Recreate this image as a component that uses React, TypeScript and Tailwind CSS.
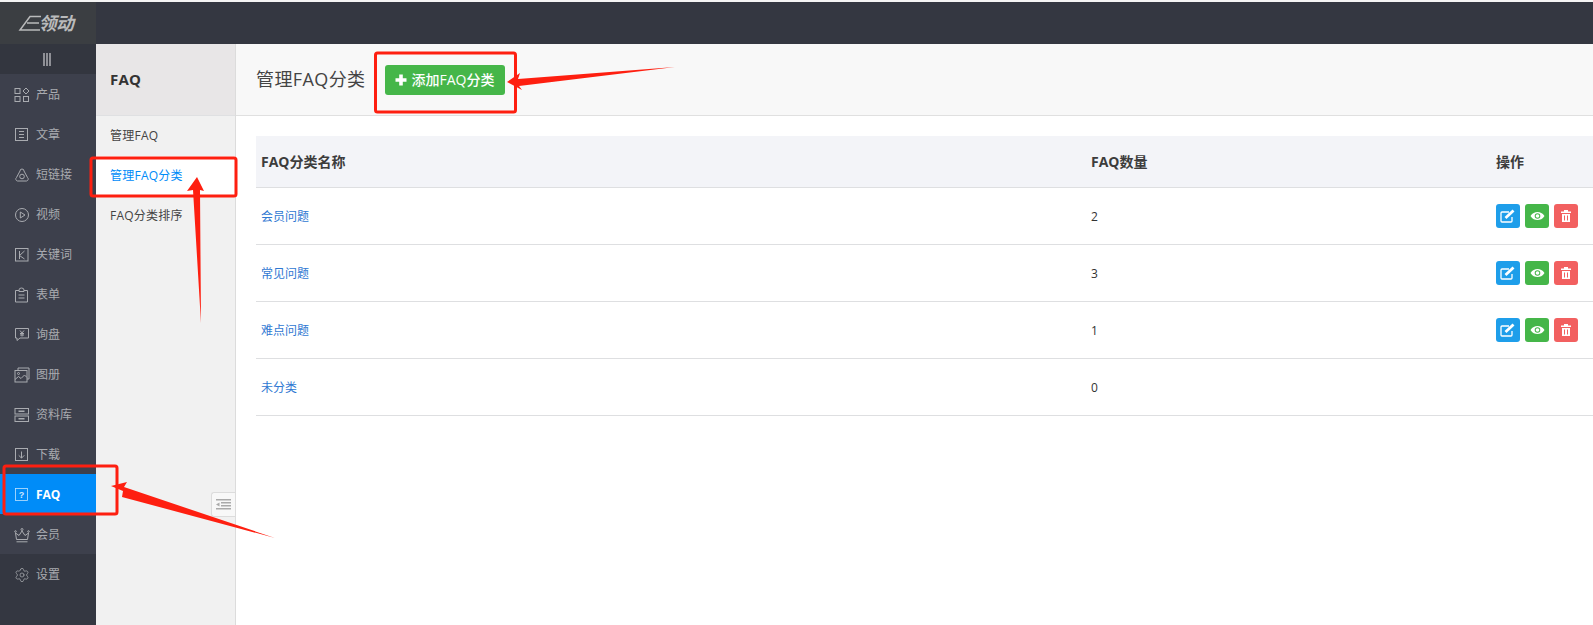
import React from "react";
import { Settings } from "lucide-react";

const S = { fill: "none", stroke: "currentColor", strokeWidth: 1 } as const;
const I = ({ children }: { children: React.ReactNode }) => (
  <svg width="16" height="16" viewBox="0 0 16 16" {...S} className="shrink-0">{children}</svg>
);
const menu: [string, React.ReactNode][] = [
  ["产品", <I><rect x="1" y="1.500" width="5" height="5" /><path d="M12 1l3 3-3 3-3-3z" /><rect x="1" y="9.500" width="5" height="5" /><rect x="9.500" y="9.500" width="5" height="5" /></I>],
  ["文章", <I><rect x="1.500" y="1.500" width="12" height="12" /><path d="M5 4.500h5M5 7.500h5M5 10.500h5" /></I>],
  ["短链接", <I><path d="M8 2a2 2 0 012 2l3.500 6.500a2 2 0 01-1 3.500h-9a2 2 0 01-1-3.500L6 4a2 2 0 012-2z" /><circle cx="8" cy="9.500" r="2.300" /></I>],
  ["视频", <I><circle cx="8" cy="8" r="6.500" /><path d="M6.300 5v6l4.700-3z" /></I>],
  ["关键词", <I><rect x="1.500" y="1.500" width="12.500" height="12.500" /><path d="M5.500 4v8M10.500 4L5.500 8.500l5 3.500" /></I>],
  ["表单", <I><path d="M5 3.500H1.500V15h12V3.500H10" /><path d="M5 4.500V3a2.500 2 0 015 0v1.500z" /><path d="M4.500 8h6M4.500 11h6" /></I>],
  ["询盘", <I><path d="M1.500 1.500h13v9.500H6l-3 2.500V11H1.500z" /><path d="M6 3.500l2 2.500 2-2.500M8 6v3.500M6 6.500h4M6 8h4" /></I>],
  ["图册", <I><path d="M4 3.500V1h11v11h-2" /><rect x="1" y="3.500" width="12" height="11.500" /><path d="M1 12.500l3.500-3 2.500 2 3.500-3.500 2.500 2.500" /><circle cx="4.500" cy="6.500" r="1" /></I>],
  ["资料库", <I><rect x="1" y="1.500" width="13.500" height="5.500" /><rect x="1" y="9" width="13.500" height="5.500" /><path d="M4.500 4.200h6M4.500 11.800h6" strokeWidth="1.500" /></I>],
  ["下载", <I><rect x="1.500" y="1.500" width="12" height="12" /><path d="M7.500 4.500v6.500M4.700 8.300l2.800 2.800 2.800-2.800" /></I>],
  ["FAQ", <I><rect x="1.500" y="1.500" width="12" height="12" strokeWidth=".8" opacity=".75" /><text x="7.500" y="11" fontSize="9" textAnchor="middle" fill="currentColor" stroke="none" opacity=".8" fontFamily="Liberation Sans">?</text></I>],
  ["会员", <I><path d="M1.500 6l3.500 2.500 3-4.500 3 4.500L14.500 6l-1 6.500h-11z" /><path d="M2.500 14.800h11" /><circle cx="8" cy="2.500" r="1" /><circle cx="1.500" cy="4.500" r=".8" /><circle cx="14.500" cy="4.500" r=".8" /></I>],
];
const rows: [string, string, boolean][] = [
  ["会员问题", "2", true],
  ["常见问题", "3", true],
  ["难点问题", "1", true],
  ["未分类", "0", false],
];
const Btn = ({ c, children }: { c: string; children: React.ReactNode }) => (
  <span className={`flex h-6 w-6 items-center justify-center rounded-[3px] text-white ${c}`}>{children}</span>
);
export default function App() {
  return (
    <div className="relative h-[625px] w-[1593px] overflow-hidden bg-white text-[12px] text-[#333]" style={{ fontFamily: '"Open Sans","Noto Sans CJK SC",sans-serif' }}>
      <div className="h-[2px] bg-[#f4f4f4]" />
      <div className="flex h-[623px]">
        <aside className="flex w-[96px] shrink-0 flex-col bg-[#343741] text-[#a9abb0]">
          <div className="flex h-[42px] items-center justify-center bg-[#3b3e42] pr-[5px]">
            <svg width="24" height="17" viewBox="0 0 24 17" fill="none" stroke="#b9babb" strokeWidth="1.500" className="mr-[-3px]"><path d="M23 1.500H12L2 15h20M9 8h12" /></svg>
            <span className="text-[18px] font-bold italic leading-none tracking-[-0.5px] text-[#b9babb]">领动</span>
          </div>
          <div className="flex h-[30px] items-center justify-center bg-[#33363f] pr-[3px]">
            <span className="flex gap-[1px]"><i className="h-[13px] w-[2px] bg-[#8f9096]" /><i className="h-[13px] w-[2px] bg-[#8f9096]" /><i className="h-[13px] w-[2px] bg-[#8f9096]" /></span>
          </div>
          <nav className="bg-[#3d404c]">
            {menu.map(([t, ic]) => (
              <div key={t} className={`flex h-[40px] items-center gap-[6px] pl-[14px] pt-[2px] ${t === "FAQ" ? "bg-[#008cf8] font-bold text-white" : ""}`}>
                {ic}<span>{t}</span>
              </div>
            ))}
          </nav>
          <div className="flex h-[40px] items-center gap-[6px] pl-[14px] pt-[2px]"><Settings size={16} strokeWidth={1.100} className="shrink-0" /><span>设置</span></div>
        </aside>
        <div className="flex min-w-0 flex-1 flex-col">
          <div className="h-[42px] shrink-0 bg-[#343741]" />
          <div className="flex min-h-0 flex-1">
            <aside className="relative w-[140px] shrink-0 border-r border-[#dcdcdc] bg-[#f1f1f1] tracking-[0.25px]">
              <div className="flex h-[72px] items-center border-b border-[#dfe0e2] bg-[#e8e6e7] pl-[14px] text-[15px] font-bold">FAQ</div>
              <div className="flex h-[40px] items-center pl-[14px] text-[#444]">管理FAQ</div>
              <div className="flex h-[40px] items-center bg-white pl-[14px] text-[#008cf8]">管理FAQ分类</div>
              <div className="flex h-[40px] items-center pl-[14px] text-[#444]">FAQ分类排序</div>
              <div className="absolute right-0 top-[448px] flex h-[25px] w-[24px] items-center justify-center rounded-l-[3px] border border-r-0 border-[#dcdcdc] bg-[#f8f8f8]">
                <svg width="15" height="11" viewBox="0 0 15 11" fill="#aaa"><path d="M0 0h15v1.500H0zM5 3h10v1.500H5zM5 6h10v1.500H5zM0 9h15v1.500H0zM3.500 3.500v4L0 5.500z" /></svg>
              </div>
            </aside>
            <main className="min-w-0 flex-1">
              <div className="flex h-[72px] items-center border-b border-[#e0e0e0] bg-[#f8f8f8] pl-[20px]">
                <h1 className="text-[18px] font-normal tracking-[0.4px] text-[#444]">管理FAQ分类</h1>
                <button className="ml-[20px] flex h-[30px] w-[120px] items-center gap-[4px] whitespace-nowrap rounded-[3px] bg-[#45b649] pl-[10px] text-[14px] font-medium text-white">
                  <svg width="12" height="12" viewBox="0 0 12 12" fill="#fff" className="shrink-0"><path d="M4.200.5h3.600v3.700h3.700v3.600H7.800v3.700H4.200V7.800H.5V4.200h3.700z" /></svg>
                  添加FAQ分类
                </button>
              </div>
              <div className="pl-[20px] pt-[20px]">
                <div className="flex h-[52px] items-center border-b border-[#dedfe1] bg-[#f3f4f8] text-[14px] font-bold text-[#3c3c3c]">
                  <div className="w-[830px] pl-[5px]">FAQ分类名称</div>
                  <div className="w-[405px] pl-[5px]">FAQ数量</div>
                  <div className="pl-[5px]">操作</div>
                </div>
                {rows.map(([n, c, a]) => (
                  <div key={n} className="flex h-[57px] items-center border-b border-[#dedfe1]">
                    <div className="w-[830px] pl-[5px] pt-[2px] text-[#2f78d2]">{n}</div>
                    <div className="w-[405px] pl-[5px] pt-[2px]">{c}</div>
                    {a && (
                      <div className="flex gap-[5px] pl-[5px]">
                        <Btn c="bg-[#1e9eea]"><svg width="16" height="14" viewBox="0 0 16 14" fill="none" stroke="#fff" strokeWidth="1.300"><path d="M12 8v4a1 1 0 01-1 1H2a1 1 0 01-1-1V4a1 1 0 011-1h7" /><path d="M5.500 9L13.500 1.500" strokeWidth="2.800" /></svg></Btn>
                        <Btn c="bg-[#45b649]"><svg width="15" height="14" viewBox="0 0 14 14" fill="#fff"><path fillRule="evenodd" d="M0 7c2-3 4.300-4 7-4s5 1 7 4c-2 3-4.300 4-7 4S2 10 0 7zm7-2.800a2.800 2.800 0 100 5.600 2.800 2.800 0 000-5.600z" /><circle cx="7" cy="7" r="1.800" /></svg></Btn>
                        <Btn c="bg-[#f26060]"><svg width="14" height="14" viewBox="0 0 14 14" fill="#fff"><path fillRule="evenodd" d="M5 1h4v1.500h3V4H2V2.500h3zM3 5h8v8H3zm2 1.500v5h1v-5zm3 0v5h1v-5z" /></svg></Btn>
                      </div>
                    )}
                  </div>
                ))}
              </div>
            </main>
          </div>
        </div>
      </div>
      <svg className="pointer-events-none absolute left-0 top-0" width="1593" height="625" fill="none">
        <rect x="375.500" y="53" width="140" height="59" rx="2" stroke="#fe1f10" strokeWidth="3" />
        <rect x="91" y="158" width="145" height="38" rx="2" stroke="#fe1f10" strokeWidth="3" />
        <rect x="4" y="466" width="113" height="48" rx="2" stroke="#fe1f10" strokeWidth="3" />
        <polygon fill="#fe1f10" points="197,177 204,191 200,190 201,323 193,190 187,191" />
        <polygon fill="#fe1f10" points="111,486 127,482 124,487 275,538 122,497 123,491" />
        <polygon fill="#fe1f10" points="507,82 520,73 518,79 675,67 519,86 522,90" />
      </svg>
    </div>
  );
}
